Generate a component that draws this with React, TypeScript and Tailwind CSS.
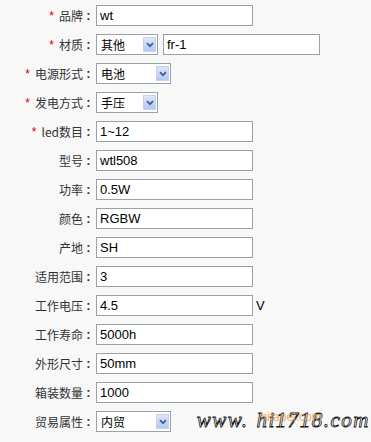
import React from 'react'

type Field = {
  label: string
  req?: boolean
  value: string
  kind?: 'input' | 'select'
  w?: number
  extra?: string
  unit?: string
}

const fields: Field[] = [
  { label: '品牌', req: true, value: 'wt' },
  { label: '材质', req: true, value: '其他', kind: 'select', w: 62, extra: 'fr-1' },
  { label: '电源形式', req: true, value: '电池', kind: 'select', w: 75 },
  { label: '发电方式', req: true, value: '手压', kind: 'select', w: 62 },
  { label: 'led数目', req: true, value: '1~12' },
  { label: '型号', value: 'wtl508' },
  { label: '功率', value: '0.5W' },
  { label: '颜色', value: 'RGBW' },
  { label: '产地', value: 'SH' },
  { label: '适用范围', value: '3' },
  { label: '工作电压', value: '4.5', unit: 'V' },
  { label: '工作寿命', value: '5000h' },
  { label: '外形尺寸', value: '50mm' },
  { label: '箱装数量', value: '1000' },
  { label: '贸易属性', value: '内贸', kind: 'select', w: 75 },
]

function TextBox({ value, width }: { value: string; width: number }) {
  return (
    <div
      className="h-[21px] border border-[#9aa2a8] bg-white pl-[3px] flex items-center text-[13px] text-black font-['Liberation_Sans','Noto_Sans_CJK_SC',sans-serif] shrink-0"
      style={{ width }}
    >
      {value}
    </div>
  )
}

function Dropdown({ value, width }: { value: string; width: number }) {
  return (
    <div
      className="h-[21px] border border-[#9aa2a8] bg-white flex items-center justify-between pl-[4px] pr-[1px] shrink-0"
      style={{ width }}
    >
      <span className="text-[12px] text-black font-['Noto_Sans_CJK_SC',sans-serif] leading-none">{value}</span>
      <span className="w-[13px] h-[15px] flex items-center justify-center bg-gradient-to-b from-[#dce6fb] to-[#b3c8f3] border border-[#c3d1f0]">
        <svg width="8" height="6" viewBox="0 0 8 6">
          <path d="M1 1.2 L4 4.2 L7 1.2" fill="none" stroke="#4a5f8c" strokeWidth="1.8" />
        </svg>
      </span>
    </div>
  )
}

export default function App() {
  return (
    <div className="relative w-[371px] h-[442px] bg-[#f8f8f8] overflow-hidden pt-[5px]">
      <div className="flex flex-col gap-[8px]">
        {fields.map((f) => (
          <div key={f.label} className="flex items-center h-[21px]">
            <div className="w-[96px] pr-[2px] flex items-center justify-end text-[12px] text-[#333] font-['Noto_Sans_CJK_SC',sans-serif] leading-none whitespace-nowrap">
              {f.req && <span className="text-[#d40000] mr-[5px] font-['Liberation_Sans',sans-serif]">*</span>}
              <span>{f.label}</span>
              <span className="inline-block w-[11px] text-center font-bold text-[13px] font-['Liberation_Sans',sans-serif]">:</span>
            </div>
            {f.kind === 'select' ? (
              <Dropdown value={f.value} width={f.w ?? 62} />
            ) : (
              <TextBox value={f.value} width={157} />
            )}
            {f.extra && (
              <div className="ml-[5px]">
                <TextBox value={f.extra} width={157} />
              </div>
            )}
            {f.unit && (
              <span className="ml-[3px] text-[13px] text-black font-['Liberation_Sans',sans-serif]">{f.unit}</span>
            )}
          </div>
        ))}
      </div>

      {/* watermark */}
      <div className="absolute right-[1px] bottom-[6px] flex items-baseline italic font-['Liberation_Serif',serif] text-[21px] tracking-[1.5px] text-white [-webkit-text-stroke:0.8px_#111]">
        <span>www.</span>
        <span className="ml-[8px] relative">
          hi1718.com
          <span className="absolute left-[4px] top-[3px] not-italic text-[12px] text-[#e8a050] [-webkit-text-stroke:0px] tracking-normal font-['Liberation_Sans',sans-serif] opacity-80">
            hitapel.com
          </span>
        </span>
      </div>
    </div>
  )
}
